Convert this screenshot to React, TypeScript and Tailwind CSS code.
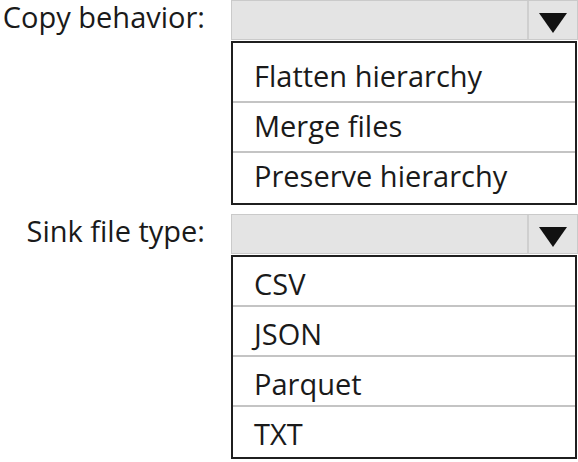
import React from 'react';

type DropdownProps = {
  label: string;
  options: string[];
  listPad: string;
  rowPad: string;
};

function Dropdown({ label, options, listPad, rowPad }: DropdownProps) {
  return (
    <div className="flex">
      <div className="w-[231px] shrink-0 pr-[26px] text-right text-[29px] leading-[34px] text-[#1a1a1a]">
        {label}
      </div>
      <div className="flex-1">
        <div className="flex h-[40px] border border-[#cacaca] bg-[#e4e4e4]">
          <div className="flex-1" />
          <div className="flex w-[50px] items-center justify-center border-l-2 border-[#cfcfcf] pt-[6px]">
            <svg width="28" height="20" viewBox="0 0 28 20">
              <polygon points="0,0 28,0 14,20" fill="#111" />
            </svg>
          </div>
        </div>
        <div className={`mt-px mr-px border-2 border-[#1f1f1f] bg-white ${listPad}`}>
          {options.map((opt) => (
            <div
              key={opt}
              className={`h-[50px] border-b-2 border-[#c4c4c4] pl-[21px] text-[29px] leading-[30px] text-[#1a1a1a] last:border-b-0 ${rowPad}`}
            >
              {opt}
            </div>
          ))}
        </div>
      </div>
    </div>
  );
}

export default function App() {
  return (
    <div className="h-[462px] w-[578px] overflow-hidden bg-white font-['Open_Sans',sans-serif]">
      <Dropdown
        label="Copy behavior:"
        options={['Flatten hierarchy', 'Merge files', 'Preserve hierarchy']}
        listPad="pt-[10px]"
        rowPad="pt-[8px]"
      />
      <div className="mt-[9px]">
        <Dropdown
          label="Sink file type:"
          options={['CSV', 'JSON', 'Parquet', 'TXT']}
          listPad="pt-0"
          rowPad="pt-[12px]"
        />
      </div>
    </div>
  );
}
